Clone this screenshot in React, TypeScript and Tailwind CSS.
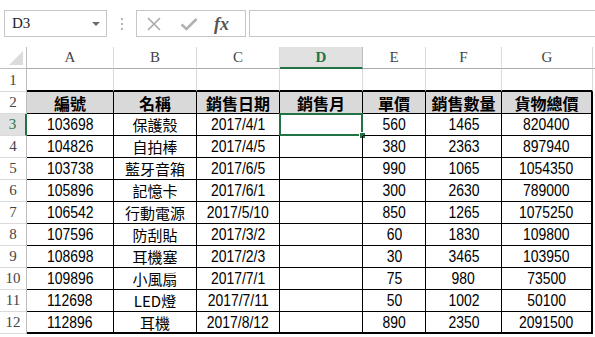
import React from 'react';

// 試算表資料
const rows = [
  ['103698', '保護殼', '2017/4/1', '', '560', '1465', '820400'],
  ['104826', '自拍棒', '2017/4/5', '', '380', '2363', '897940'],
  ['103738', '藍牙音箱', '2017/6/5', '', '990', '1065', '1054350'],
  ['105896', '記憶卡', '2017/6/1', '', '300', '2630', '789000'],
  ['106542', '行動電源', '2017/5/10', '', '850', '1265', '1075250'],
  ['107596', '防刮貼', '2017/3/2', '', '60', '1830', '109800'],
  ['108698', '耳機塞', '2017/2/3', '', '30', '3465', '103950'],
  ['109896', '小風扇', '2017/7/1', '', '75', '980', '73500'],
  ['112698', 'LED燈', '2017/7/11', '', '50', '1002', '50100'],
  ['112896', '耳機', '2017/8/12', '', '890', '2350', '2091500'],
];

const headers = ['編號', '名稱', '銷售日期', '銷售月', '單價', '銷售數量', '貨物總價'];
const letters = ['A', 'B', 'C', 'D', 'E', 'F', 'G'];
const widths = ['w-[87px]', 'w-[83px]', 'w-[83px]', 'w-[83px]', 'w-[63px]', 'w-[76px]', 'w-[91px]'];

const headFont = "[font-family:'Liberation_Serif',serif]";

const RowHeader = ({ n, active }: { n: number; active?: boolean }) => (
  <div
    className={`w-[27px] shrink-0 flex items-center justify-center border-b border-[#dadada] ${
      active ? 'text-[#217346] border-r-2 border-r-[#217346] bg-[#e1e1e1]' : 'text-[#444] border-r border-r-[#bdbdbd]'
    } ${headFont} text-[15px] leading-none`}
  >
    {n}
  </div>
);

const CellText = ({ text, col }: { text: string; col: number }) => {
  if (col === 1) {
    // nombres en chino
    return <span className="[font-family:'Noto_Sans_CJK_TC',sans-serif] text-[15px] leading-none">{text}</span>;
  }
  return (
    <span className="inline-block scale-x-[0.82] [font-family:'Liberation_Sans',sans-serif] text-[17px] leading-none">
      {text}
    </span>
  );
};

const App = () => {
  return (
    <div className="w-[595px] h-[337px] bg-white overflow-hidden relative select-none">
      {/* barra de fórmulas */}
      <div className="h-[47px] flex items-start pt-[10px]">
        <div className="ml-[4px] w-[103px] h-[27px] border border-[#c6c6c6] flex items-center justify-between pl-[7px] pr-[6px]">
          <span className={`${headFont} text-[15px] text-[#222]`}>D3</span>
          <span className="w-0 h-0 border-l-[4px] border-r-[4px] border-t-[4px] border-l-transparent border-r-transparent border-t-[#6d6d6d]" />
        </div>
        <div className="w-[29px] h-[27px] flex flex-col items-center justify-center gap-[3px]">
          <span className="w-[2px] h-[2px] bg-[#b5b5b5]" />
          <span className="w-[2px] h-[2px] bg-[#b5b5b5]" />
          <span className="w-[2px] h-[2px] bg-[#b5b5b5]" />
        </div>
        <div className="w-[110px] h-[27px] border border-[#c6c6c6] flex items-center pl-[9px]">
          <svg width="16" height="16" viewBox="0 0 16 16" className="mr-[18px]">
            <path d="M2 2 L14 14 M14 2 L2 14" stroke="#a9a9a9" strokeWidth="1.6" />
          </svg>
          <svg width="18" height="14" viewBox="0 0 18 14" className="mr-[16px]">
            <path d="M1.5 7.5 L6.5 12 L16.5 2" stroke="#b1b1b1" strokeWidth="2.6" fill="none" />
          </svg>
          <span className="[font-family:'Liberation_Serif',serif] italic font-bold text-[18px] text-[#555] leading-none">
            fx
          </span>
        </div>
        <div className="ml-[3px] flex-1 h-[27px] border border-r-0 border-[#c6c6c6]" />
      </div>

      {/* encabezado de columnas */}
      <div className="flex h-[22px]">
        <div className="w-[27px] shrink-0 border-r border-b border-[#bdbdbd] flex items-end justify-end pr-[3px] pb-[3px]">
          <span className="w-0 h-0 [border-bottom:14px_solid_#dcdcdc] [border-left:14px_solid_transparent]" />
        </div>
        {letters.map((l, i) =>
          l === 'D' ? (
            <div
              key={l}
              className={`${widths[i]} shrink-0 bg-[#e1e1e1] border-r border-r-[#bdbdbd] border-b-2 border-b-[#217346] flex items-center justify-center ${headFont} font-bold text-[15px] text-[#217346] leading-none`}
            >
              {l}
            </div>
          ) : (
            <div
              key={l}
              className={`${widths[i]} shrink-0 border-r border-r-[#dadada] border-b border-b-[#ababab] flex items-center justify-center ${headFont} text-[15px] text-[#444] leading-none`}
            >
              {l}
            </div>
          )
        )}
        <div className="flex-1 border-b border-b-[#ababab]" />
      </div>

      {/* fila 1 */}
      <div className="flex h-[23px]">
        <RowHeader n={1} />
        {letters.map((l, i) => (
          <div key={l} className={`${widths[i]} shrink-0 border-r border-r-[#dadada] border-b-2 border-b-black`} />
        ))}
        <div className="flex-1" />
      </div>

      {/* fila 2: títulos */}
      <div className="flex h-[22px]">
        <RowHeader n={2} />
        {headers.map((h, i) => (
          <div
            key={h}
            className={`${widths[i]} shrink-0 bg-[#d9d9d9] border-b border-b-black ${
              i === 6 ? 'border-r-2' : 'border-r'
            } border-r-black flex items-center justify-center`}
          >
            <span className="[font-family:'Noto_Sans_CJK_TC',sans-serif] font-bold text-[16px] text-black leading-none">
              {h}
            </span>
          </div>
        ))}
        <div className="flex-1" />
      </div>

      {/* datos */}
      {rows.map((r, ri) => (
        <div key={ri} className="flex h-[22px]">
          <RowHeader n={ri + 3} active={ri === 0} />
          {r.map((c, ci) => (
            <div
              key={ci}
              className={`${widths[ci]} shrink-0 relative ${ri === rows.length - 1 ? 'border-b-2' : 'border-b'} border-b-black ${
                ci === 6 ? 'border-r-2' : 'border-r'
              } border-r-black flex items-center justify-center text-black`}
            >
              {c && <CellText text={c} col={ci} />}
              {ri === 0 && ci === 3 && (
                <>
                  <div className="absolute -left-[1px] -top-[1px] -right-[1px] -bottom-[1px] border-2 border-[#217346]" />
                  <div className="absolute -right-[4px] -bottom-[4px] w-[7px] h-[7px] bg-[#217346] border border-white" />
                </>
              )}
            </div>
          ))}
          <div className="flex-1" />
        </div>
      ))}
    </div>
  );
};

export default App;
